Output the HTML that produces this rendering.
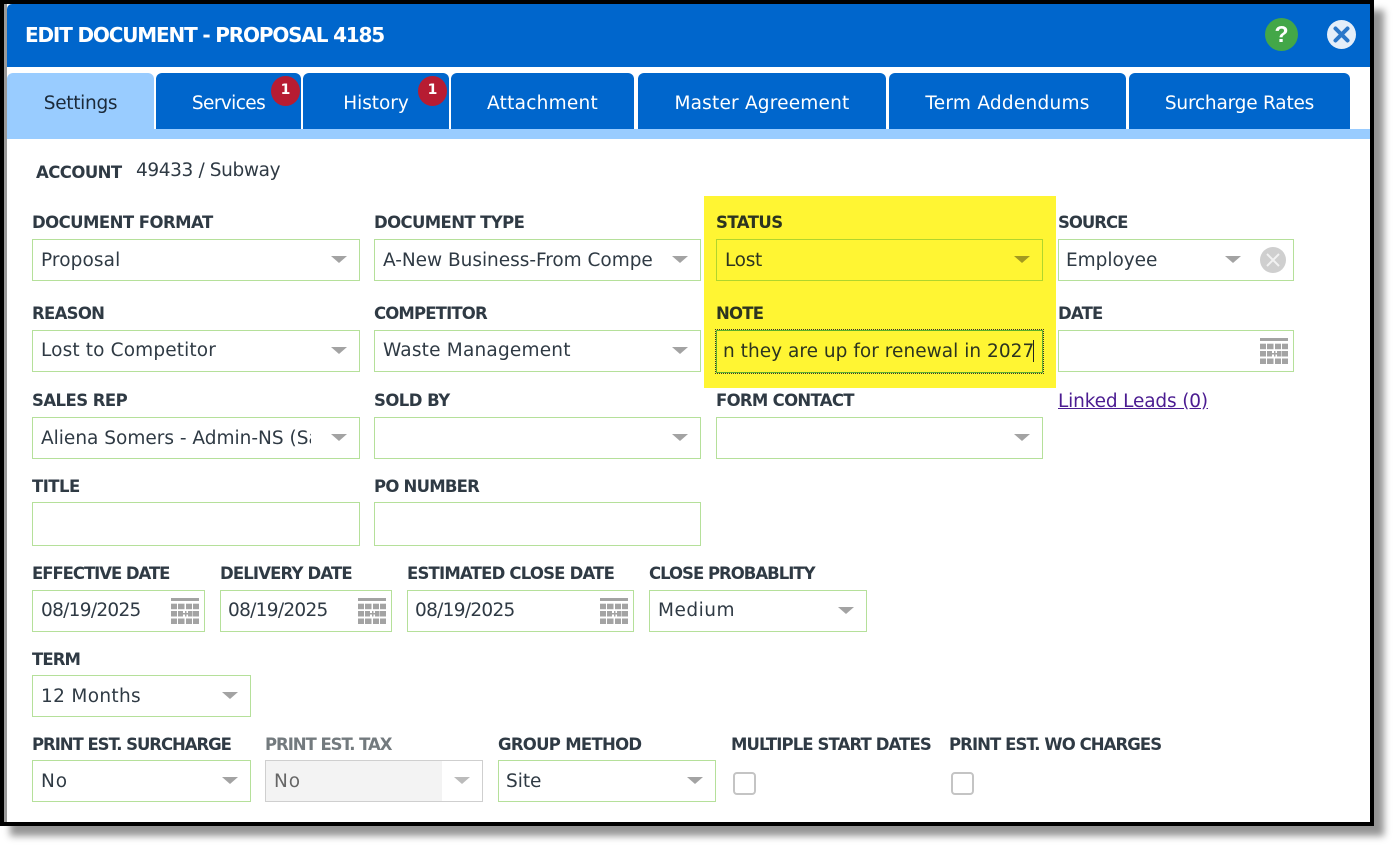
<!DOCTYPE html>
<html><head><meta charset="utf-8"><style>
html,body{margin:0;padding:0;background:#fff}
body{width:1394px;height:846px;position:relative;overflow:hidden;font-family:"DejaVu Sans","Liberation Sans",sans-serif;color:#2f3a44}
div,span,a{position:absolute;white-space:nowrap}
.frame{left:0;top:0;width:1374px;height:826px;background:#000;box-shadow:10px 10px 7px rgba(0,0,0,.42)}
.gr{left:4px;top:4px;width:3px;height:818px;background:#9a9a9a}
.page{left:7px;top:4px;width:1363px;height:818px;background:#fff}
.hdr{left:7px;top:4px;width:1363px;height:63px;background:#0066cc;border-radius:5px 0 0 0}
.ttl{left:25px;top:22px;font-size:20px;line-height:26px;font-weight:bold;color:#fff;letter-spacing:-1.17px}
.strip{left:7px;top:129px;width:1363px;height:10px;background:#99ccff}
.tab{top:73px;height:56px;background:#0066cc;border-radius:6px 6px 0 0;color:#fff;font-size:18.5px;line-height:61px;text-align:center}
.tab.on{background:#99ccff;color:#1b2a3a}
.bdg{top:76px;width:29px;height:30px;border-radius:50%;background:#b71c32;color:#fff;font-size:14px;line-height:28px;text-align:center;font-weight:bold}
.l{font-size:16.5px;line-height:20px;font-weight:bold;letter-spacing:-.55px;color:#2f3a44;margin-top:1px}
.b{box-sizing:border-box;height:42px;border:1px solid #b5e09a;background:#fff}
.t{font-size:18.5px;line-height:24px;letter-spacing:-.03px;color:#2f3a44;margin-top:1.500px}
.d{letter-spacing:-.7px}
.ar{width:0;height:0;border-left:8px solid transparent;border-right:8px solid transparent;border-top:7px solid #a3a3a3}
.hl{left:704px;top:196px;width:352px;height:192px;background:#fff533}
.ck{box-sizing:border-box;width:23px;height:23px;border:2px solid #c4c4c4;border-radius:4px;background:#fff;top:772px}
svg{position:absolute}
</style></head><body>
<div class="frame"></div>
<div class="gr"></div>
<div class="page"></div>
<div class="hdr"></div>
<div class="ttl">EDIT DOCUMENT - PROPOSAL 4185</div>
<svg style="left:1265px;top:18px" width="34" height="34" viewBox="0 0 34 34"><circle cx="16.500" cy="16.500" r="16.500" fill="#43a748"/><text x="16.500" y="24" font-size="23" font-weight="bold" text-anchor="middle" fill="#fff" font-family="Liberation Sans">?</text></svg>
<svg style="left:1327px;top:20px" width="30" height="30" viewBox="0 0 30 30"><circle cx="14.500" cy="14.500" r="14.500" fill="#e4eef9"/><path d="M8.500 8.500L20.500 20.500M20.500 8.500L8.500 20.500" stroke="#2a77c9" stroke-width="4" stroke-linecap="round"/></svg>

<div class="tab on" style="left:7px;width:147px;letter-spacing:-.3px">Settings</div>
<div class="tab" style="left:156px;width:145px;letter-spacing:-.6px">Services</div>
<div class="tab" style="left:303px;width:146px;letter-spacing:-.05px">History</div>
<div class="tab" style="left:451px;width:183px;letter-spacing:.25px">Attachment</div>
<div class="tab" style="left:638px;width:248px;letter-spacing:.2px">Master Agreement</div>
<div class="tab" style="left:889px;width:237px;letter-spacing:.25px">Term Addendums</div>
<div class="tab" style="left:1129px;width:221px;letter-spacing:-.2px">Surcharge Rates</div>
<div class="bdg" style="left:271px">1</div>
<div class="bdg" style="left:418px">1</div>
<div class="strip"></div>

<div class="l" style="left:36px;top:162px">ACCOUNT</div>
<div class="t" style="left:136px;top:157px;letter-spacing:-.38px">49433 / Subway</div>

<div class="hl"></div>

<div class="l" style="left:32px;top:212px">DOCUMENT FORMAT</div>
<div class="l" style="left:374px;top:212px;letter-spacing:-.62px">DOCUMENT TYPE</div>
<div class="l" style="left:716px;top:212px;color:#2c3420">STATUS</div>
<div class="l" style="left:1058px;top:212px;letter-spacing:-1px">SOURCE</div>
<div class="b" style="left:32px;top:239px;width:328px"></div><div class="t" style="left:41px;top:247px;letter-spacing:.1px">Proposal</div><div class="ar" style="left:331px;top:256px"></div>
<div class="b" style="left:374px;top:239px;width:327px"></div><div class="t" style="left:383px;top:247px">A-New Business-From Compe</div><div class="ar" style="left:672px;top:256px"></div>
<div class="b" style="left:716px;top:239px;width:327px;background:#fff533;border-color:#b1d52c"></div><div class="t" style="left:725px;top:247px;color:#2c3420;letter-spacing:-.3px">Lost</div><div class="ar" style="left:1014px;top:256px;border-top-color:#a39a1f"></div>
<div class="b" style="left:1058px;top:239px;width:236px"></div><div class="t" style="left:1066px;top:247px">Employee</div><div class="ar" style="left:1225px;top:256px"></div>
<svg style="left:1260px;top:247px" width="26" height="26" viewBox="0 0 26 26"><circle cx="13" cy="13" r="13" fill="#cfcfcf"/><path d="M7 7L19 19M19 7L7 19" stroke="#f2f2f2" stroke-width="2"/></svg>

<div class="l" style="left:32px;top:303px;letter-spacing:-.7px">REASON</div>
<div class="l" style="left:374px;top:303px;letter-spacing:-.85px">COMPETITOR</div>
<div class="l" style="left:716px;top:303px;color:#2c3420;letter-spacing:-.8px">NOTE</div>
<div class="l" style="left:1058px;top:303px;letter-spacing:-.8px">DATE</div>
<div class="b" style="left:32px;top:330px;width:328px"></div><div class="t" style="left:41px;top:337px;letter-spacing:.14px">Lost to Competitor</div><div class="ar" style="left:331px;top:347px"></div>
<div class="b" style="left:374px;top:330px;width:327px"></div><div class="t" style="left:383px;top:337px;letter-spacing:.2px">Waste Management</div><div class="ar" style="left:672px;top:347px"></div>
<div class="b" style="left:716px;top:330px;width:327px;background:#fff533;border:1px solid #5fb02a;outline:1px dotted #333;height:43px"></div><div class="t" style="left:723px;top:338px;color:#2c3420;letter-spacing:.03px">n they are up for renewal in 2027</div><div style="left:1033px;top:340px;width:1px;height:22px;background:#222"></div>
<div class="b" style="left:1058px;top:330px;width:236px"></div>

<div class="l" style="left:32px;top:390px">SALES REP</div>
<div class="l" style="left:374px;top:390px">SOLD BY</div>
<div class="l" style="left:716px;top:390px;letter-spacing:-.7px">FORM CONTACT</div>
<a class="t" style="left:1058px;top:388px;color:#4b1c91;text-decoration:underline;letter-spacing:-.15px">Linked Leads (0)</a>
<div class="b" style="left:32px;top:417px;width:328px"></div><div class="t" style="left:41px;top:425px;width:270px;overflow:hidden;letter-spacing:0">Aliena Somers - Admin-NS (Sales)</div><div class="ar" style="left:331px;top:434px"></div>
<div class="b" style="left:374px;top:417px;width:327px"></div><div class="ar" style="left:672px;top:434px"></div>
<div class="b" style="left:716px;top:417px;width:327px"></div><div class="ar" style="left:1014px;top:434px"></div>

<div class="l" style="left:32px;top:476px">TITLE</div>
<div class="l" style="left:374px;top:476px;letter-spacing:-.77px">PO NUMBER</div>
<div class="b" style="left:32px;top:502px;width:328px;height:44px"></div>
<div class="b" style="left:374px;top:502px;width:327px;height:44px"></div>

<div class="l" style="left:32px;top:563px;letter-spacing:-1.05px">EFFECTIVE DATE</div>
<div class="l" style="left:220px;top:563px;letter-spacing:-.85px">DELIVERY DATE</div>
<div class="l" style="left:407px;top:563px;letter-spacing:-.8px">ESTIMATED CLOSE DATE</div>
<div class="l" style="left:649px;top:563px;letter-spacing:-1px">CLOSE PROBABLITY</div>
<div class="b" style="left:32px;top:590px;width:173px"></div><div class="t d" style="left:41px;top:597px">08/19/2025</div>
<div class="b" style="left:220px;top:590px;width:172px"></div><div class="t d" style="left:228px;top:597px">08/19/2025</div>
<div class="b" style="left:407px;top:590px;width:227px"></div><div class="t d" style="left:415px;top:597px">08/19/2025</div>
<div class="b" style="left:649px;top:590px;width:218px"></div><div class="t" style="left:658px;top:597px;letter-spacing:.5px">Medium</div><div class="ar" style="left:838px;top:607px"></div>

<svg width="0" height="0" style="left:0;top:0"><defs><g id="cal" fill="#a3a3a3"><rect x="0" y="0" width="28" height="3"/><rect x="0" y="5.700" width="6" height="5.500"/><rect x="7" y="5.700" width="6.500" height="5.500"/><rect x="15" y="5.700" width="6" height="5.500"/><rect x="22" y="5.700" width="6" height="5.500"/><rect x="0" y="13" width="6" height="5.500"/><rect x="7" y="13" width="5" height="5.500"/><rect x="12" y="15" width="5" height="1.500"/><rect x="14" y="13" width="1.500" height="5.500"/><rect x="17" y="13" width="4.500" height="5.500"/><rect x="22" y="13" width="6" height="5.500"/><rect x="0" y="20.500" width="6" height="5.500"/><rect x="7" y="20.500" width="6.500" height="5.500"/><rect x="15" y="20.500" width="6" height="5.500"/><rect x="22" y="20.500" width="6" height="5.500"/></g></defs></svg>
<svg style="left:1260px;top:338px" width="28" height="26"><use href="#cal"/></svg>
<svg style="left:171px;top:598px" width="28" height="26"><use href="#cal"/></svg>
<svg style="left:358px;top:598px" width="28" height="26"><use href="#cal"/></svg>
<svg style="left:600px;top:598px" width="28" height="26"><use href="#cal"/></svg>

<div class="l" style="left:32px;top:649px;letter-spacing:-.9px">TERM</div>
<div class="b" style="left:32px;top:675px;width:219px"></div><div class="t" style="left:41px;top:683px;letter-spacing:.33px">12 Months</div><div class="ar" style="left:222px;top:692px"></div>

<div class="l" style="left:32px;top:734px;letter-spacing:-1.05px">PRINT EST. SURCHARGE</div>
<div class="l" style="left:265px;top:734px;color:#737a7e;letter-spacing:-1.05px">PRINT EST. TAX</div>
<div class="l" style="left:498px;top:734px;letter-spacing:-.72px">GROUP METHOD</div>
<div class="l" style="left:731px;top:734px;letter-spacing:-.9px">MULTIPLE START DATES</div>
<div class="l" style="left:949px;top:734px;letter-spacing:-.93px">PRINT EST. WO CHARGES</div>
<div class="b" style="left:32px;top:760px;width:219px"></div><div class="t" style="left:41px;top:768px;letter-spacing:.9px">No</div><div class="ar" style="left:222px;top:777px"></div>
<div class="b" style="left:265px;top:760px;width:218px;border-color:#cfcfcf"></div><div style="left:266px;top:761px;width:176px;height:40px;background:#f3f3f3"></div><div class="t" style="left:274px;top:768px;color:#666;letter-spacing:.9px">No</div><div class="ar" style="left:454px;top:777px;border-top-color:#bbb"></div>
<div class="b" style="left:498px;top:760px;width:218px"></div><div class="t" style="left:506px;top:768px">Site</div><div class="ar" style="left:687px;top:777px"></div>
<div class="ck" style="left:733px"></div>
<div class="ck" style="left:951px"></div>
</body></html>
